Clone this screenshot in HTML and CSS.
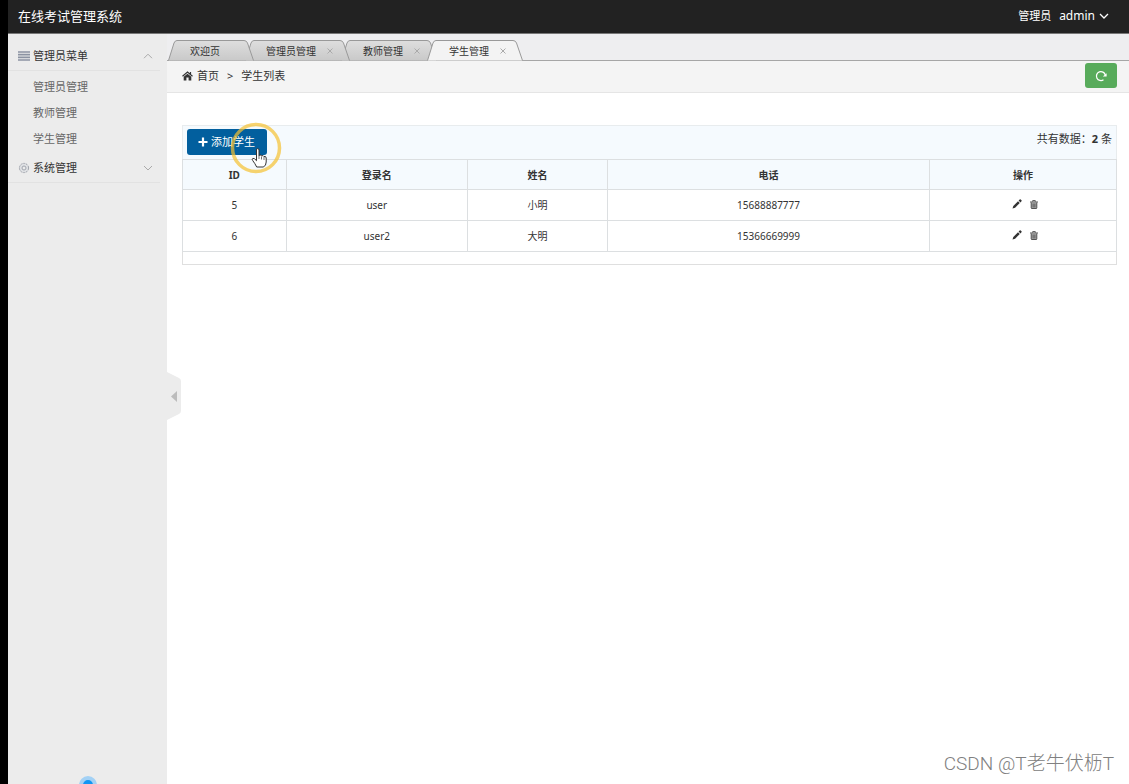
FILE: index.html
```html
<!DOCTYPE html>
<html lang="zh-CN">
<head>
<meta charset="utf-8">
<title>在线考试管理系统</title>
<link rel="stylesheet" href="styles.css">
</head>
<body>
<div class="app">
  <header class="topbar">
    <h1 class="brand">在线考试管理系统</h1>
    <div class="user">
      <span>管理员</span>
      <button type="button" class="user-menu">admin
        <svg width="10" height="6" viewBox="0 0 10 6"><path d="M1 1l4 4 4-4" fill="none" stroke="#fff" stroke-width="1.3"/></svg>
      </button>
    </div>
  </header>
  <div class="body">
    <nav class="sidebar">
      <button type="button" class="group">
        <svg class="group-icon" width="12" height="10" viewBox="0 0 12 10"><path d="M0 1h12M0 3.7h12M0 6.3h12M0 9h12" stroke="#8c93a2" stroke-width="1.7"/></svg>
        <span>管理员菜单</span>
        <svg class="chevron" width="10" height="6" viewBox="0 0 10 6"><path d="M1 5.200l4-4 4 4" fill="none" stroke="#aaa"/></svg>
      </button>
      <ul class="links">
        <li><a href="#">管理员管理</a></li>
        <li><a href="#">教师管理</a></li>
        <li><a href="#">学生管理</a></li>
      </ul>
      <button type="button" class="group">
        <svg class="group-icon" width="12" height="12" viewBox="0 0 12 12"><circle cx="6" cy="6" r="4.600" fill="#dfe1e4" stroke="#a2a6ae" stroke-dasharray="2.200 .700"/><circle cx="6" cy="6" r="2" fill="#ececec" stroke="#a2a6ae"/></svg>
        <span>系统管理</span>
        <svg class="chevron" width="10" height="6" viewBox="0 0 10 6"><path d="M1 1l4 4 4-4" fill="none" stroke="#aaa"/></svg>
      </button>
      <span class="pulse"></span>
    </nav>
    <main class="main">
      <button type="button" class="collapse" aria-label="收起菜单">
        <svg width="14" height="48" viewBox="0 0 14 48"><path d="M0 0l12 6q2 1 2 3v30q0 2-2 3L0 48z" fill="#ececec"/><path d="M10 19v11l-6-5.500z" fill="#bcbcbc"/></svg>
      </button>
      <div class="tabs">
        <button type="button" class="tab tab-home">
          <svg class="tab-shape" viewBox="0 0 86 21" preserveAspectRatio="none"><path d="M.5 20.500L6 3Q7 .5 9 .5h67q2.500 0 3.500 2.500l6 17.500"/></svg>
          <span>欢迎页</span>
        </button>
        <button type="button" class="tab tab-admin">
          <svg class="tab-shape" viewBox="0 0 105 21" preserveAspectRatio="none"><path d="M.5 20.500L6 3Q7 .5 9 .5h86q2.500 0 3.500 2.500l6 17.500"/></svg>
          <span>管理员管理</span><svg class="close" width="6" height="6" viewBox="0 0 6 6"><path d="M.5.5l5 5M5.500.5l-5 5"/></svg>
        </button>
        <button type="button" class="tab tab-teacher">
          <svg class="tab-shape" viewBox="0 0 96 21" preserveAspectRatio="none"><path d="M.5 20.500L6 3Q7 .5 9 .5h77q2.500 0 3.500 2.500l6 17.500"/></svg>
          <span>教师管理</span><svg class="close" width="6" height="6" viewBox="0 0 6 6"><path d="M.5.5l5 5M5.500.5l-5 5"/></svg>
        </button>
        <button type="button" class="tab tab-student">
          <svg class="tab-shape" viewBox="0 0 96 21" preserveAspectRatio="none"><path d="M.5 20.500L6 3Q7 .5 9 .5h77q2.500 0 3.500 2.500l6 17.500"/></svg>
          <span>学生管理</span><svg class="close" width="6" height="6" viewBox="0 0 6 6"><path d="M.5.5l5 5M5.500.5l-5 5"/></svg>
        </button>
        <svg class="paint" width="0" height="0"><defs><linearGradient id="tabfill" x2="0" y2="1"><stop stop-color="#dedede"/><stop offset="1" stop-color="#c9c9c9"/></linearGradient></defs></svg>
      </div>
      <div class="crumbs">
        <svg width="11" height="10" viewBox="0 0 11 10"><path d="M5.500 2.700L1.700 5.800V9.500h2.700V6.500h2.200v3h2.700V5.800z" fill="#333"/><path d="M.5 5.300l5-4.200 5 4.200M8.500 1v2.500" fill="none" stroke="#333" stroke-width="1.200"/></svg>
        <a href="#">首页</a><span class="sep">&gt;</span><span>学生列表</span>
        <button type="button" class="refresh" aria-label="刷新">
          <svg width="12" height="12" viewBox="0 0 12 12"><path d="M8.500 9.800A4.500 4.500 0 1 1 10.300 5" fill="none" stroke="#fff" stroke-width="1.300"/><path d="M11.600 3.200v3.300H7.800z" fill="#fff"/></svg>
        </button>
      </div>
      <section class="content">
        <div class="toolbar">
          <button type="button" class="add">
            <svg width="10" height="10" viewBox="0 0 10 10"><path d="M5 .5v9M.5 5h9" stroke="#fff" stroke-width="2.200"/></svg>
            <span>添加学生</span>
            <svg class="pointer" width="52" height="52" viewBox="0 0 52 52"><circle cx="26" cy="26" r="23.500" fill="none" stroke="#f5c031" stroke-opacity=".7" stroke-width="3.500"/><path d="M26.500 28q0-1.500 1.200-1.500T29 28v5.500l1-.5q1.200-.3 1.600.8 1.800-.7 2.300.7 2.300-.5 2.300 1.500v4q0 4-3 5h-6.500q-1.700-3.500-4-6.500-1.200-1.600.2-2.200 1.500-.2 3.600 2.400z" fill="#fff" stroke="#333"/><path d="M29 33v4M31.500 34.500v3M34 35v3" stroke="#333" stroke-width=".7"/></svg>
          </button>
          <span class="total">共有数据：<strong>2</strong> 条</span>
        </div>
        <table class="grid">
          <colgroup><col class="c-id"><col class="c-login"><col class="c-name"><col class="c-phone"><col class="c-act"></colgroup>
          <thead><tr><th>ID</th><th>登录名</th><th>姓名</th><th>电话</th><th>操作</th></tr></thead>
          <tbody>
            <tr><td>5</td><td>user</td><td>小明</td><td>15688887777</td><td><div class="actions">
              <button type="button" aria-label="编辑"><svg width="10" height="10" viewBox="0 0 10 10"><path d="M.5 9.500l.8-2.600L6 2.200l1.800 1.800-4.700 4.700zM6.600 1.600L7.700.5q.5-.4 1 0l.8.8q.4.500 0 1L8.400 3.400z" fill="#333"/></svg></button>
              <button type="button" aria-label="删除"><svg width="8" height="9" viewBox="0 0 8 9"><path d="M1 2.500h6v5.800q0 .7-.7.700H1.700Q1 9 1 8.300z" fill="#aaa"/><path d="M0 2h8M2.700 1.700V.6h2.600v1.100M1.200 2.500v5.300q0 .7.700.7h4.200q.7 0 .7-.7V2.500M3.100 3.500v4M4.900 3.500v4" fill="none" stroke="#555"/></svg></button></div></td></tr>
            <tr><td>6</td><td>user2</td><td>大明</td><td>15366669999</td><td><div class="actions">
              <button type="button" aria-label="编辑"><svg width="10" height="10" viewBox="0 0 10 10"><path d="M.5 9.500l.8-2.600L6 2.200l1.800 1.800-4.700 4.700zM6.600 1.600L7.700.5q.5-.4 1 0l.8.8q.4.500 0 1L8.400 3.400z" fill="#333"/></svg></button>
              <button type="button" aria-label="删除"><svg width="8" height="9" viewBox="0 0 8 9"><path d="M1 2.500h6v5.800q0 .7-.7.700H1.700Q1 9 1 8.300z" fill="#aaa"/><path d="M0 2h8M2.700 1.700V.6h2.600v1.100M1.200 2.500v5.300q0 .7.700.7h4.200q.7 0 .7-.7V2.500M3.100 3.500v4M4.900 3.500v4" fill="none" stroke="#555"/></svg></button></div></td></tr>
          </tbody>
        </table>
        <div class="grid-foot"></div>
      </section>
      <p class="watermark">CSDN @T老牛伏枥T</p>
    </main>
  </div>
</div>
</body>
</html>
```

FILE: styles.css
```css
* { box-sizing: border-box; }
body {
  margin: 0;
  background: #fff;
  color: #333;
  font: 11px/16px "Noto Sans", "Noto Sans CJK SC", sans-serif;
}
button {
  border: 0;
  padding: 0;
  background: none;
  color: inherit;
  font: inherit;
  cursor: pointer;
}
a { color: inherit; text-decoration: none; }
svg { display: block; flex: none; }

.app {
  display: flex;
  flex-direction: column;
  min-height: 100vh;
  border-left: 8px solid #000;
}
.topbar {
  display: flex;
  align-items: center;
  justify-content: space-between;
  height: 34px;
  padding: 0 20px 2px 10px;
  border-bottom: 1px solid #777;
  background: #222;
  color: #fff;
}
.brand { margin: 0; font-size: 13px; font-weight: 400; }
.user { display: flex; align-items: center; gap: 8px; }
.user-menu { display: flex; align-items: center; gap: 4px; font-size: 12px; }

.body { display: flex; flex: 1; }
.sidebar {
  position: relative;
  flex: none;
  width: 159px;
  padding-top: 7px;
  background: #ececec;
}
.group {
  display: flex;
  align-items: center;
  gap: 3px;
  width: 152px;
  height: 30px;
  padding: 0 7px 0 10px;
  border-bottom: 1px solid #e2e2e2;
}
.chevron { margin-left: auto; }
.links { margin: 0; padding: 3px 0 1px 25px; list-style: none; color: #666; }
.links a { display: block; line-height: 26px; }
.pulse {
  position: absolute;
  bottom: -10px;
  left: 71px;
  width: 18px;
  height: 18px;
  border: 4px solid #a3d1f5;
  border-radius: 50%;
  background: #1296f3;
  clip-path: inset(0 0 10px 0);
}

.main { position: relative; flex: 1; min-width: 0; }
.collapse { position: absolute; top: 338px; left: 0; }
.tabs {
  display: flex;
  align-items: flex-end;
  height: 27px;
  padding-left: 1px;
  border-bottom: 1px solid #a6a6a6;
  background: #eeeef0;
}
.tab {
  position: relative;
  display: flex;
  align-items: center;
  gap: 11px;
  height: 21px;
  margin-bottom: -1px;
  font-size: 10px;
}
.tab span, .tab .close { position: relative; }
.tab-shape {
  position: absolute;
  inset: 0;
  width: 100%;
  height: 100%;
  fill: url(#tabfill);
  stroke: #999;
}
.close { stroke: #aaa; fill: none; }
.tab-home { z-index: 3; width: 86px; padding-left: 22px; }
.tab-admin { z-index: 2; width: 105px; margin-left: -9px; padding-left: 21px; }
.tab-teacher { z-index: 1; width: 96px; margin-left: -9px; padding-left: 22px; }
.tab-student { z-index: 4; width: 96px; margin-left: -10px; padding-left: 22px; }
.tab-student .tab-shape { fill: #f3f3f3; }
.paint { position: absolute; }

.crumbs {
  display: flex;
  align-items: center;
  height: 32px;
  padding: 0 12px 2px 15px;
  border-bottom: 1px solid #e5e5e5;
  background: #f4f4f4;
}
.crumbs a { margin-left: 4px; }
.sep { margin: 0 8px; }
.refresh {
  display: grid;
  place-items: center;
  width: 32px;
  height: 25px;
  margin-left: auto;
  border-radius: 3px;
  background: #58ab5b;
}

.content { padding: 32px 12px 0 15px; }
.toolbar {
  display: flex;
  justify-content: space-between;
  height: 34px;
  padding: 3px 4px;
  border: 1px solid #e8ecee;
  border-bottom: 0;
  background: #f5fafe;
}
.total { padding-top: 2px; }
.add {
  position: relative;
  display: flex;
  align-items: center;
  gap: 3px;
  width: 80px;
  height: 26px;
  padding-left: 11px;
  border-radius: 3px;
  background: #025f9e;
  color: #fff;
}
.pointer { position: absolute; top: -7px; left: 43px; }
.grid {
  width: 100%;
  table-layout: fixed;
  border-collapse: collapse;
  font-size: 10px;
  text-align: center;
}
.c-id { width: 11.1%; }
.c-login { width: 19.4%; }
.c-name { width: 15%; }
.c-phone { width: 34.5%; }
.c-act { width: 20%; }
.grid th, .grid td { height: 31px; padding: 0; border: 1px solid #dcdfe1; }
.grid th { height: 30px; background: #f5fafe; }
.actions { display: flex; align-items: center; justify-content: center; gap: 8px; padding: 0 0 2px 4px; }
.grid-foot { height: 13px; border: 1px solid #dfdfdf; border-top: 0; }
.watermark {
  position: absolute;
  right: 15px;
  bottom: 8px;
  margin: 0;
  color: #808080;
  font: 300 19px/24px Roboto, "Noto Sans CJK SC", sans-serif;
}
```
